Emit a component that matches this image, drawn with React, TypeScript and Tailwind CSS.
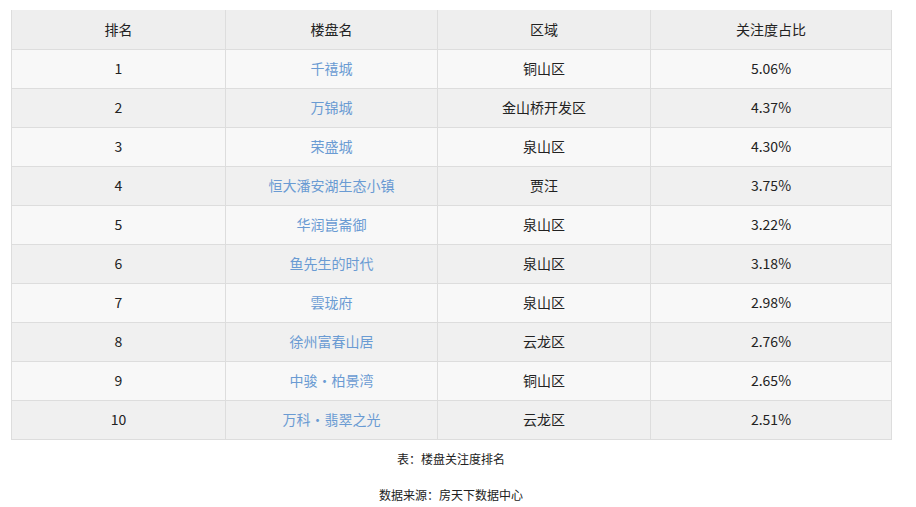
const rows = [
  ['1', '千禧城', '铜山区', '5.06%'],
  ['2', '万锦城', '金山桥开发区', '4.37%'],
  ['3', '荣盛城', '泉山区', '4.30%'],
  ['4', '恒大潘安湖生态小镇', '贾汪', '3.75%'],
  ['5', '华润崑崙御', '泉山区', '3.22%'],
  ['6', '鱼先生的时代', '泉山区', '3.18%'],
  ['7', '雲珑府', '泉山区', '2.98%'],
  ['8', '徐州富春山居', '云龙区', '2.76%'],
  ['9', '中骏·柏景湾', '铜山区', '2.65%'],
  ['10', '万科·翡翠之光', '云龙区', '2.51%'],
]

export default function App() {
  return (
    <div className="w-[916px] h-[507px] bg-white pt-[10px] pl-[11px] text-[14px] text-[#222]" style={{ fontFamily: '"Microsoft YaHei", "Noto Sans CJK SC", sans-serif' }}>
      <table className="w-[880px] border-collapse table-fixed">
        <colgroup>
          <col className="w-[214px]" />
          <col className="w-[212px]" />
          <col className="w-[213px]" />
          <col className="w-[241px]" />
        </colgroup>
        <thead>
          <tr className="h-[39px] bg-[#eeeeee]">
            {['排名', '楼盘名', '区域', '关注度占比'].map((h) => (
              <th key={h} className="border border-[#dddddd] border-t-0 font-normal text-center">{h}</th>
            ))}
          </tr>
        </thead>
        <tbody>
          {rows.map((r, i) => (
            <tr key={r[0]} className={`h-[39px] ${i % 2 === 0 ? 'bg-[#f8f8f8]' : 'bg-[#f0f0f0]'}`}>
              <td className="border border-[#dddddd] text-center">{r[0]}</td>
              <td className="border border-[#dddddd] text-center text-[#6a9bd3]">{r[1]}</td>
              <td className="border border-[#dddddd] text-center">{r[2]}</td>
              <td className="border border-[#dddddd] text-center">{r[3]}</td>
            </tr>
          ))}
        </tbody>
      </table>
      <p className="w-[880px] text-center text-[12px] mt-[10px]">表：楼盘关注度排名</p>
      <p className="w-[880px] text-center text-[12px] mt-[18px]">数据来源：房天下数据中心</p>
    </div>
  )
}
